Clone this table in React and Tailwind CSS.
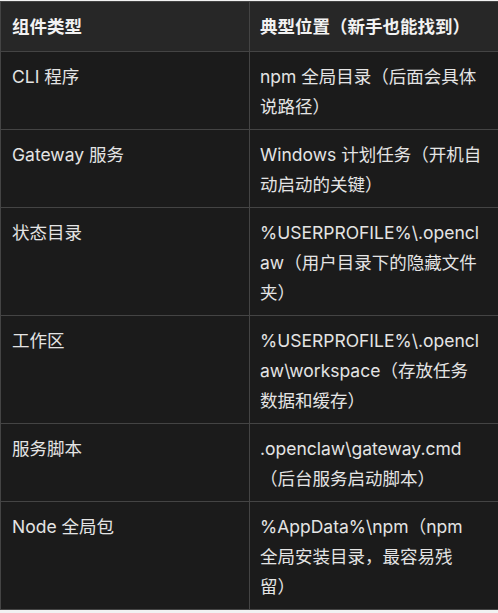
export default function App() {
  const rows = [
    [["CLI 程序"], ["npm 全局目录（后面会具体", "说路径）"]],
    [["Gateway 服务"], ["Windows 计划任务（开机自", "动启动的关键）"]],
    [["状态目录"], ["%USERPROFILE%\\.opencl", "aw（用户目录下的隐藏文件", "夹）"]],
    [["工作区"], ["%USERPROFILE%\\.opencl", "aw\\workspace（存放任务", "数据和缓存）"]],
    [["服务脚本"], [".openclaw\\gateway.cmd", "（后台服务启动脚本）"]],
    [["Node 全局包"], ["%AppData%\\npm（npm", "全局安装目录，最容易残", "留）"]],
  ];
  const font = { fontFamily: 'Inter, "Noto Sans CJK SC", sans-serif' };
  return (
    <div className="w-[498px] h-[613px] bg-[#f2f2f2] overflow-hidden pt-px" style={font}>
      <table className="w-[498px] table-fixed border-collapse bg-[#1b1b1b] text-[17.5px] leading-[30px] text-[#e4e4e4]">
        <colgroup>
          <col className="w-[249px]" />
          <col className="w-[249px]" />
        </colgroup>
        <thead>
          <tr className="bg-[#272727]">
            <th className="border border-[#444] text-left font-bold text-[#f2f2f2] pl-[11px] pr-[10px] pt-[10px] pb-[9px]">组件类型</th>
            <th className="border border-[#444] text-left font-bold text-[#f2f2f2] pl-[10px] pr-[10px] pt-[10px] pb-[9px]">典型位置（新手也能找到）</th>
          </tr>
        </thead>
        <tbody>
          {rows.map((r, i) => (
            <tr key={i}>
              <td className="border border-[#444] align-top pl-[11px] pr-[10px] pt-[10px] pb-[7px]">
                {r[0].map((l, j) => (
                  <span key={j} className="block whitespace-nowrap">{l}</span>
                ))}
              </td>
              <td className="border border-[#444] align-top pl-[10px] pr-[10px] pt-[10px] pb-[7px]">
                {r[1].map((l, j) => (
                  <span key={j} className="block whitespace-nowrap">{l}</span>
                ))}
              </td>
            </tr>
          ))}
        </tbody>
      </table>
    </div>
  );
}
